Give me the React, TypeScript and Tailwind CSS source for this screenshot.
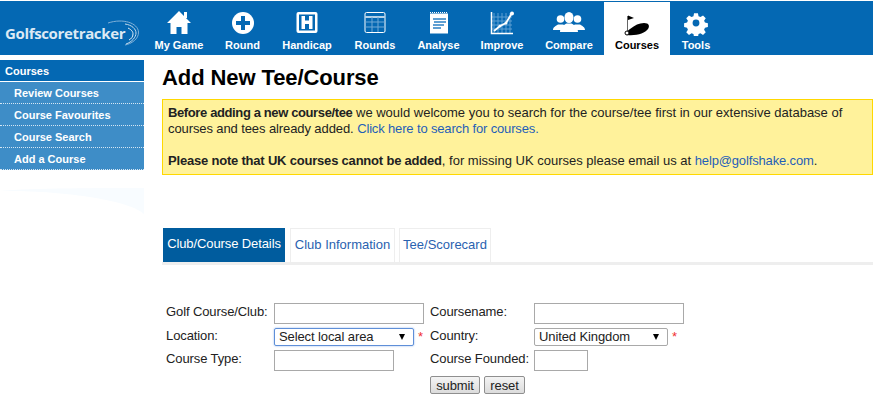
import type { ReactNode } from "react";

const BLUE = "#0468b3";

function HomeIcon() {
  return (
    <svg width="26" height="26" viewBox="0 0 26 26" fill="#fff">
      <path d="M13 1 L25 13 L21.500 13 L21.500 24 L15.500 24 L15.500 17 L10.500 17 L10.500 24 L4.500 24 L4.500 13 L1 13 Z" />
      <rect x="18" y="2" width="3" height="6" />
    </svg>
  );
}

function PlusIcon() {
  return (
    <svg width="26" height="26" viewBox="0 0 26 26">
      <circle cx="13" cy="13" r="11" fill="#fff" />
      <path d="M11 6h4v5h5v4h-5v5h-4v-5H6v-4h5z" fill={BLUE} />
    </svg>
  );
}

function HandicapIcon() {
  return (
    <svg width="26" height="26" viewBox="0 0 26 26">
      <rect x="2.500" y="2" width="21" height="21" rx="2" fill="#fff" />
      <rect x="5" y="4.500" width="16" height="16" fill={BLUE} />
      <path d="M7.500 6h3.500v4.500h4V6h3.500v13H15v-5h-4v5H7.500z" fill="#fff" />
    </svg>
  );
}

function RoundsIcon() {
  return (
    <svg width="26" height="26" viewBox="0 0 26 26">
      <rect x="3" y="2.500" width="20" height="20" rx="1.500" fill={BLUE} stroke="#fff" />
      <path d="M3.500 7h19" stroke="#fff" strokeWidth="1.400" />
      <path d="M3.500 12h19M3.500 17h19M10 7v15M16 7v15" stroke="#6ea8d6" strokeWidth="1" />
    </svg>
  );
}

function AnalyseIcon() {
  return (
    <svg width="26" height="26" viewBox="0 0 26 26">
      <rect x="4" y="3.500" width="18" height="20" fill="#fff" />
      <path d="M4 2.500h18" stroke="#fff" strokeWidth="1" strokeDasharray="1 1" />
      <path d="M7 9h13M8 12h12M7 15h11M7 18h8" stroke="#5f9fd2" strokeWidth="2" />
    </svg>
  );
}

function ImproveIcon() {
  return (
    <svg width="26" height="26" viewBox="0 0 26 26">
      <path d="M5 3v20M9 3v20M13 3v20M17 3v20M21 3v20M3 7h20M3 11h20M3 15h20M3 19h20" stroke="#5f9fd2" strokeWidth="1" />
      <path d="M2.500 2v21.500H24" stroke="#fff" strokeWidth="1.500" fill="none" />
      <path d="M5 21l6-5 6-3 6-10" stroke="#fff" strokeWidth="1.800" fill="none" />
      <circle cx="11" cy="16" r="1.500" fill="#fff" />
      <circle cx="17" cy="13" r="1.500" fill="#fff" />
      <circle cx="23" cy="3.500" r="2" fill="#fff" />
    </svg>
  );
}

function CompareIcon() {
  return (
    <svg width="32" height="26" viewBox="0 0 32 26" fill="#fff">
      <circle cx="7.500" cy="9" r="3.800" />
      <path d="M0 20c0-3 3-4 5-5.500h5l2 1-3 4.500H0z" />
      <circle cx="24.500" cy="9" r="3.800" />
      <path d="M32 20c0-3-3-4-5-5.500h-5l-2 1 3 4.500h9z" />
      <ellipse cx="16" cy="7.500" rx="4.500" ry="5.500" />
      <path d="M7 22c0-5 4-7 6.500-8.500h5C21 15 25 17 25 22z" />
    </svg>
  );
}

function CoursesIcon() {
  return (
    <svg width="28" height="26" viewBox="0 0 28 26">
      <path d="M4 25c-2-1-1-3 3-6 5-4 9-6 14-6 5 0 6 3 4 6-3 4-11 7-21 6z" fill="#000" />
      <path d="M4.500 6v17" stroke="#666" strokeWidth="1" />
      <path d="M5 5.500l6 2.500-6 2z" fill="#000" />
      <circle cx="4" cy="23" r="2" fill="#fff" stroke="#000" />
    </svg>
  );
}

function ToolsIcon() {
  return (
    <svg width="26" height="26" viewBox="0 0 24 24" fill="#fff">
      <path
        fillRule="evenodd"
        d="M10 2h4l.6 3 2 .9 2.600-1.700 2.800 2.800-1.700 2.600.9 2 3 .6v4l-3 .6-.9 2 1.700 2.600-2.800 2.800-2.600-1.700-2 .9-.6 3h-4l-.6-3-2-.9-2.600 1.700-2.800-2.800 1.700-2.600-.9-2-3-.6v-4l3-.6.9-2-1.700-2.600 2.800-2.800 2.600 1.700 2-.9z M12 8.500a3.500 3.500 0 1 0 0 7 3.500 3.500 0 0 0 0-7z"
        transform="translate(1.200 1.200) scale(0.9)"
      />
    </svg>
  );
}

function Logo() {
  return (
    <div className="relative h-[54px] w-[144px] shrink-0">
      <span className="absolute left-[5px] top-[24px] text-[15px] leading-[17px] font-bold text-[#dce9f4] font-['Open_Sans',sans-serif] tracking-[-0.35px] whitespace-nowrap">
        Golfscoretracker
      </span>
      <svg className="absolute left-[105px] top-[18px]" width="38" height="30" viewBox="0 0 38 30" fill="none">
        <path d="M3 4 C18 -1 33 4 33.500 13 C34 20 26 25 20 26" stroke="#7fb0d8" strokeWidth="1" />
        <path d="M20 5 C27 6 31 10 31 14 C31 18 27 23 21 25" stroke="#c4dbed" strokeWidth="1" />
        <path d="M23 9 C27 11 28 13 28 15 C28 18 26 20 24 21" stroke="#e4eff7" strokeWidth="1" />
      </svg>
    </div>
  );
}

const NAV: { label: string; width: string; icon: ReactNode; active?: boolean }[] = [
  { label: "My Game", width: "w-[70px]", icon: <HomeIcon /> },
  { label: "Round", width: "w-[57px]", icon: <PlusIcon /> },
  { label: "Handicap", width: "w-[72px]", icon: <HandicapIcon /> },
  { label: "Rounds", width: "w-[64px]", icon: <RoundsIcon /> },
  { label: "Analyse", width: "w-[63px]", icon: <AnalyseIcon /> },
  { label: "Improve", width: "w-[64px]", icon: <ImproveIcon /> },
  { label: "Compare", width: "w-[70px]", icon: <CompareIcon /> },
  { label: "Courses", width: "w-[66px]", icon: <CoursesIcon />, active: true },
  { label: "Tools", width: "w-[52px]", icon: <ToolsIcon /> },
];

const SIDE_LINKS = ["Review Courses", "Course Favourites", "Course Search", "Add a Course"];

function TextInput({ width }: { width: string }) {
  return <input type="text" className={`${width} h-[21px] border border-[#a9a9a9] bg-white`} />;
}

function FakeSelect({ label, width, focused }: { label: string; width: string; focused?: boolean }) {
  return (
    <div className="flex items-center gap-[4px]">
      <div
        className={`${width} h-[18px] flex items-center justify-between pl-[4px] pr-[8px] rounded-[2px] border text-[13px] text-[#222] ${
          focused ? "border-[#5f8fd8] shadow-[0_0_2px_#8ab0ea]" : "border-[#a9a9a9]"
        }`}
      >
        <span>{label}</span>
        <span className="w-0 h-0 border-x-[3.500px] border-x-transparent border-t-[6px] border-t-black" />
      </div>
      <span className="text-[13px] leading-[14px] text-[#f03030]">*</span>
    </div>
  );
}

function Button({ width, children }: { width: string; children: ReactNode }) {
  return (
    <button className={`${width} h-[18px] leading-[15px] text-[13px] text-[#222] border border-[#8f8f8f] rounded-[2px] bg-gradient-to-b from-[#f4f4f4] to-[#dcdcdc]`}>
      {children}
    </button>
  );
}

export default function App() {
  return (
    <div className="w-[873px] h-[403px] overflow-hidden bg-white pt-px font-['Liberation_Sans',Arial,sans-serif] text-[13px] text-[#222]">
      <header className="h-[54px] flex" style={{ backgroundColor: BLUE }}>
        <Logo />
        <nav className="flex">
          {NAV.map(item => (
            <div
              key={item.label}
              className={`${item.width} flex flex-col items-center ${item.active ? "bg-white text-black mt-px" : "text-white"}`}
            >
              <div className={`h-[26px] flex items-center ${item.active ? "mt-[8px]" : "mt-[9px]"}`}>{item.icon}</div>
              <span className="mt-[2px] text-[11px] leading-[14px] font-bold whitespace-nowrap">{item.label}</span>
            </div>
          ))}
        </nav>
      </header>

      <div className="flex mt-[5px]">
        <aside className="relative w-[144px] shrink-0">
          <div className="h-[22px] pl-[5px] pt-[2px] flex items-center bg-[#0468b3] border-b border-white text-[11px] font-bold text-white">
            Courses
          </div>
          {SIDE_LINKS.map(link => (
            <div
              key={link}
              className="h-[22px] pl-[14px] pt-[2px] flex items-center bg-[#3e8dc7] border-b border-dotted border-[#d5e6f3] text-[11px] font-bold text-white"
            >
              {link}
            </div>
          ))}
          <svg className="absolute left-0 top-[128px]" width="144" height="28" viewBox="0 0 144 28">
            <path d="M0 3 C30 0 100 0 144 0 V26 C130 12 60 2 0 3z" fill="#f8fcff" />
          </svg>
        </aside>

        <main className="flex-1 ml-[18px]">
          <h1 className="mt-[5px] text-[22px] leading-[26px] font-bold text-black tracking-[-0.1px]">Add New Tee/Course</h1>
          <div className="mt-[8px] h-[76px] pl-[5px] pt-[5px] border border-[#ffd800] bg-[#fff29b] leading-[16px] text-[13px] text-[#222]">
            <p>
              <b className="tracking-[-0.38px]">Before adding a new course/tee</b> we would welcome you to search for the course/tee first in our extensive database of
              <br />
              <span className="tracking-[-0.1px]">courses and tees already added.</span>{" "}
              <a className="text-[#1f5fb8] tracking-[-0.15px]">Click here to search for courses.</a>
            </p>
            <p className="mt-[16px]">
              <b className="tracking-[-0.2px]">Please note that UK courses cannot be added</b>, for missing UK courses please email us at{" "}
              <a className="text-[#1f5fb8] tracking-[-0.15px]">help@golfshake.com</a>.
            </p>
          </div>

          <div className="mt-[53px] flex border-b-[3px] border-[#eeeeee] gap-[4px] pl-px text-[13px]">
            <div className="h-[34px] w-[122px] pb-[2px] flex items-center justify-center bg-[#005c9e] text-white whitespace-nowrap tracking-[-0.1px]">
              Club/Course Details
            </div>
            <div className="h-[34px] w-[105px] pb-[2px] flex items-center justify-center border-x border-t border-[#eeeeee] text-[#2a62b0] ml-px">
              Club Information
            </div>
            <div className="h-[34px] w-[92px] pb-[2px] flex items-center justify-center border-x border-t border-[#eeeeee] text-[#2a62b0]">
              Tee/Scorecard
            </div>
          </div>

          <div className="mt-[38px] ml-[4px] grid grid-cols-[108px_156px_104px_auto] items-start gap-y-[4px] text-[13px] leading-[18px] tracking-[-0.1px]">
            <span>Golf Course/Club:</span>
            <TextInput width="w-[150px]" />
            <span>Coursename:</span>
            <TextInput width="w-[150px]" />

            <span className="leading-[16px]">Location:</span>
            <FakeSelect label="Select local area" width="w-[140px]" focused />
            <span className="leading-[16px]">Country:</span>
            <FakeSelect label="United Kingdom" width="w-[134px]" />

            <span>Course Type:</span>
            <TextInput width="w-[120px]" />
            <span>Course Founded:</span>
            <TextInput width="w-[54px]" />

            <div className="col-start-3 col-span-2 mt-px flex gap-[4px]">
              <Button width="w-[50px]">submit</Button>
              <Button width="w-[41px]">reset</Button>
            </div>
          </div>
        </main>
      </div>
    </div>
  );
}
